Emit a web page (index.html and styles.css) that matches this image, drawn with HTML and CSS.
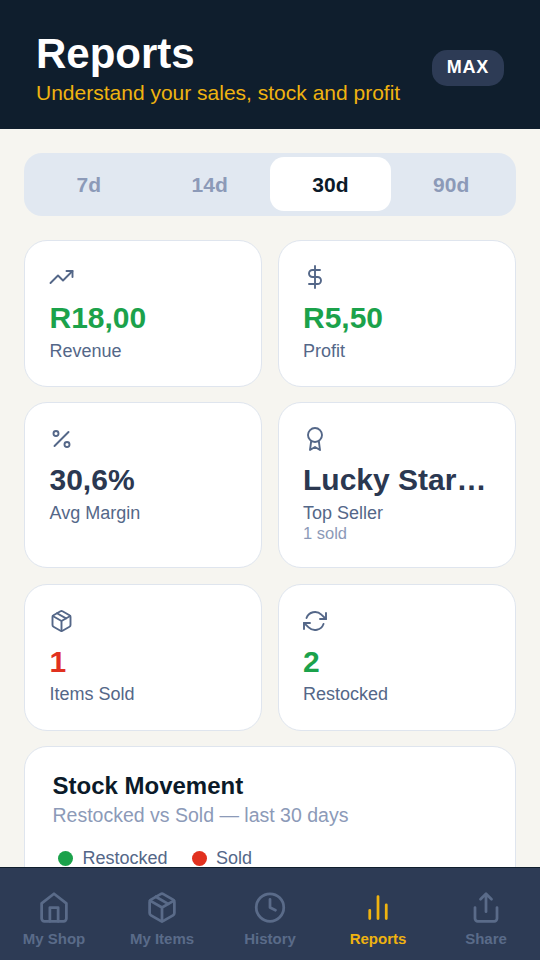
FILE: index.html
```html
<!DOCTYPE html>
<html lang="en">
<head>
<meta charset="utf-8">
<title>Reports</title>
<link rel="stylesheet" href="styles.css">
</head>
<body>
<div class="app">
  <header class="header">
    <div>
      <h1 class="title">Reports</h1>
      <p class="subtitle">Understand your sales, stock and profit</p>
    </div>
    <span class="badge">MAX</span>
  </header>

  <main class="content">
    <div class="tabs">
      <button class="tab">7d</button>
      <button class="tab">14d</button>
      <button class="tab active">30d</button>
      <button class="tab">90d</button>
    </div>

    <section class="stats">
      <article class="card">
        <svg class="icon" viewBox="0 0 24 24"><path d="M23 6l-9.500 9.500-5-5L1 18"/><path d="M17 6h6v6"/></svg>
        <div class="value green">R18,00</div>
        <div class="label">Revenue</div>
      </article>
      <article class="card">
        <svg class="icon" viewBox="0 0 24 24"><path d="M12 1v22"/><path d="M17 5H9.500a3.500 3.500 0 0 0 0 7h5a3.500 3.500 0 0 1 0 7H6"/></svg>
        <div class="value green">R5,50</div>
        <div class="label">Profit</div>
      </article>
      <article class="card">
        <svg class="icon" viewBox="0 0 24 24"><path d="M19 5L5 19"/><circle cx="6.500" cy="6.500" r="2.500"/><circle cx="17.500" cy="17.500" r="2.500"/></svg>
        <div class="value">30,6%</div>
        <div class="label">Avg Margin</div>
      </article>
      <article class="card">
        <svg class="icon" viewBox="0 0 24 24"><circle cx="12" cy="8" r="7"/><path d="M8.210 13.890L7 23l5-3 5 3-1.210-9.120"/></svg>
        <div class="value">Lucky Star…</div>
        <div class="label">Top Seller</div>
        <div class="note">1 sold</div>
      </article>
      <article class="card">
        <svg class="icon" viewBox="0 0 24 24"><path d="M16.500 9.400l-9-5.190"/><path d="M21 16V8a2 2 0 0 0-1-1.730l-7-4a2 2 0 0 0-2 0l-7 4A2 2 0 0 0 3 8v8a2 2 0 0 0 1 1.730l7 4a2 2 0 0 0 2 0l7-4A2 2 0 0 0 21 16z"/><path d="M3.270 6.960L12 12.010l8.730-5.050M12 22.080V12"/></svg>
        <div class="value red">1</div>
        <div class="label">Items Sold</div>
      </article>
      <article class="card">
        <svg class="icon" viewBox="0 0 24 24"><path d="M23 4v6h-6M1 20v-6h6"/><path d="M3.510 9a9 9 0 0 1 14.850-3.360L23 10M1 14l4.640 4.360A9 9 0 0 0 20.490 15"/></svg>
        <div class="value green">2</div>
        <div class="label">Restocked</div>
      </article>
    </section>

    <section class="chart">
      <h2 class="chart-title">Stock Movement</h2>
      <p class="chart-sub">Restocked vs Sold — last 30 days</p>
      <div class="legend">
        <span class="key"><i class="dot dot-green"></i>Restocked</span>
        <span class="key"><i class="dot dot-red"></i>Sold</span>
      </div>
    </section>
  </main>

  <nav class="nav">
    <a class="nav-item"><svg class="nav-icon" viewBox="0 0 24 24"><path d="M3 9l9-7 9 7v11a2 2 0 0 1-2 2H5a2 2 0 0 1-2-2z"/><path d="M9 22V12h6v10"/></svg>My Shop</a>
    <a class="nav-item"><svg class="nav-icon" viewBox="0 0 24 24"><path d="M16.500 9.400l-9-5.190"/><path d="M21 16V8a2 2 0 0 0-1-1.730l-7-4a2 2 0 0 0-2 0l-7 4A2 2 0 0 0 3 8v8a2 2 0 0 0 1 1.730l7 4a2 2 0 0 0 2 0l7-4A2 2 0 0 0 21 16z"/><path d="M3.270 6.960L12 12.010l8.730-5.050M12 22.080V12"/></svg>My Items</a>
    <a class="nav-item"><svg class="nav-icon" viewBox="0 0 24 24"><circle cx="12" cy="12" r="10"/><path d="M12 6v6l4 2"/></svg>History</a>
    <a class="nav-item current"><svg class="nav-icon" viewBox="0 0 24 24"><path d="M18 20V10M12 20V4M6 20v-6"/></svg>Reports</a>
    <a class="nav-item"><svg class="nav-icon" viewBox="0 0 24 24"><path d="M4 12v8a2 2 0 0 0 2 2h12a2 2 0 0 0 2-2v-8"/><path d="M16 6l-4-4-4 4M12 2v13"/></svg>Share</a>
  </nav>
</div>
</body>
</html>
```
FILE: styles.css
```css
* {
  box-sizing: border-box;
  margin: 0;
  padding: 0;
}

body {
  font-family: "Liberation Sans", Arial, sans-serif;
  background: #f6f5f0;
}

.app {
  display: flex;
  flex-direction: column;
  height: 960px;
  overflow: hidden;
}

.header {
  display: flex;
  flex: none;
  align-items: center;
  justify-content: space-between;
  height: 129px;
  padding: 30px 36px 24px;
  background: #0f1e2d;
}

.title {
  font-size: 42px;
  line-height: 48px;
  color: #fff;
}

.subtitle {
  margin-top: 3px;
  font-size: 21px;
  line-height: 24px;
  color: #efb310;
}

.badge {
  height: 36px;
  padding: 0 15px;
  border-radius: 15px;
  background: #2d3b55;
  color: #fff;
  font-size: 18px;
  font-weight: 700;
  line-height: 35px;
  letter-spacing: 0.75px;
}

.content {
  flex: 1;
  min-height: 0;
  overflow: hidden;
  padding: 24px 24px 0;
}

.tabs {
  display: flex;
  padding: 4px 4.5px 5px;
  border-radius: 18px;
  background: #e1e8f1;
}

.tab {
  flex: 1;
  height: 54px;
  border: 0;
  border-radius: 14px;
  background: none;
  color: #8c9ab8;
  font: 700 21px/55px "Liberation Sans", Arial, sans-serif;
}

.tab.active {
  background: #fff;
  color: #0b1a29;
}

.stats {
  display: grid;
  grid-template-columns: 1fr 1fr;
  gap: 15.4px 16px;
  margin-top: 24px;
}

.card,
.chart {
  border: 1.5px solid #dfe5ee;
  border-radius: 23px;
  background: #fff;
}

.card {
  min-width: 0;
  padding: 24px 24.5px 24.5px;
}

.card:nth-child(even) {
  padding-left: 24px;
}

.icon,
.nav-icon {
  display: block;
  fill: none;
  stroke: currentColor;
  stroke-width: 2;
  stroke-linecap: round;
  stroke-linejoin: round;
}

.icon {
  width: 25px;
  height: 24px;
  color: #546788;
  stroke-width: 1.9;
}

.card:nth-child(odd) .icon {
  margin-left: -0.5px;
}

.card:nth-child(even) .icon {
  width: 24px;
}

.value {
  margin-top: 12px;
  color: #2b3851;
  font-size: 30px;
  font-weight: 700;
  line-height: 34px;
  white-space: nowrap;
}

.green {
  color: #1ba24b;
}

.red {
  color: #e1311f;
}

.label {
  margin-top: 5.5px;
  color: #546788;
  font-size: 18px;
  line-height: 21px;
}

.note {
  color: #8c9ab8;
  font-size: 16.5px;
  line-height: 19px;
}

.chart {
  height: 400px;
  margin-top: 15px;
  padding: 25px 27.5px;
}

.chart-title {
  color: #0b1a29;
  font-size: 24px;
  line-height: 27px;
}

.chart-sub {
  margin-top: 5px;
  color: #8c9ab8;
  font-size: 19.5px;
  line-height: 22px;
}

.legend {
  display: flex;
  gap: 24px;
  margin-top: 22.5px;
  padding-left: 5.5px;
}

.key {
  display: flex;
  align-items: center;
  gap: 9.500px;
  color: #546788;
  font-size: 18px;
  line-height: 21px;
}

.dot {
  width: 15px;
  height: 15px;
  border-radius: 50%;
}

.dot-green {
  background: #1ba24b;
}

.dot-red {
  background: #e1311f;
}

.nav {
  display: flex;
  flex: none;
  height: 93px;
  border-top: 1.5px solid #0f1e2d;
  background: #2d3b55;
}

.nav-item {
  display: flex;
  flex: 1;
  flex-direction: column;
  align-items: center;
  padding-top: 22.5px;
  color: #5a6b89;
  font-size: 15px;
  font-weight: 700;
  line-height: 17px;
}

.nav-icon {
  width: 34px;
  height: 33px;
  margin-bottom: 6px;
}

.nav-item.current {
  color: #efb310;
}
```
